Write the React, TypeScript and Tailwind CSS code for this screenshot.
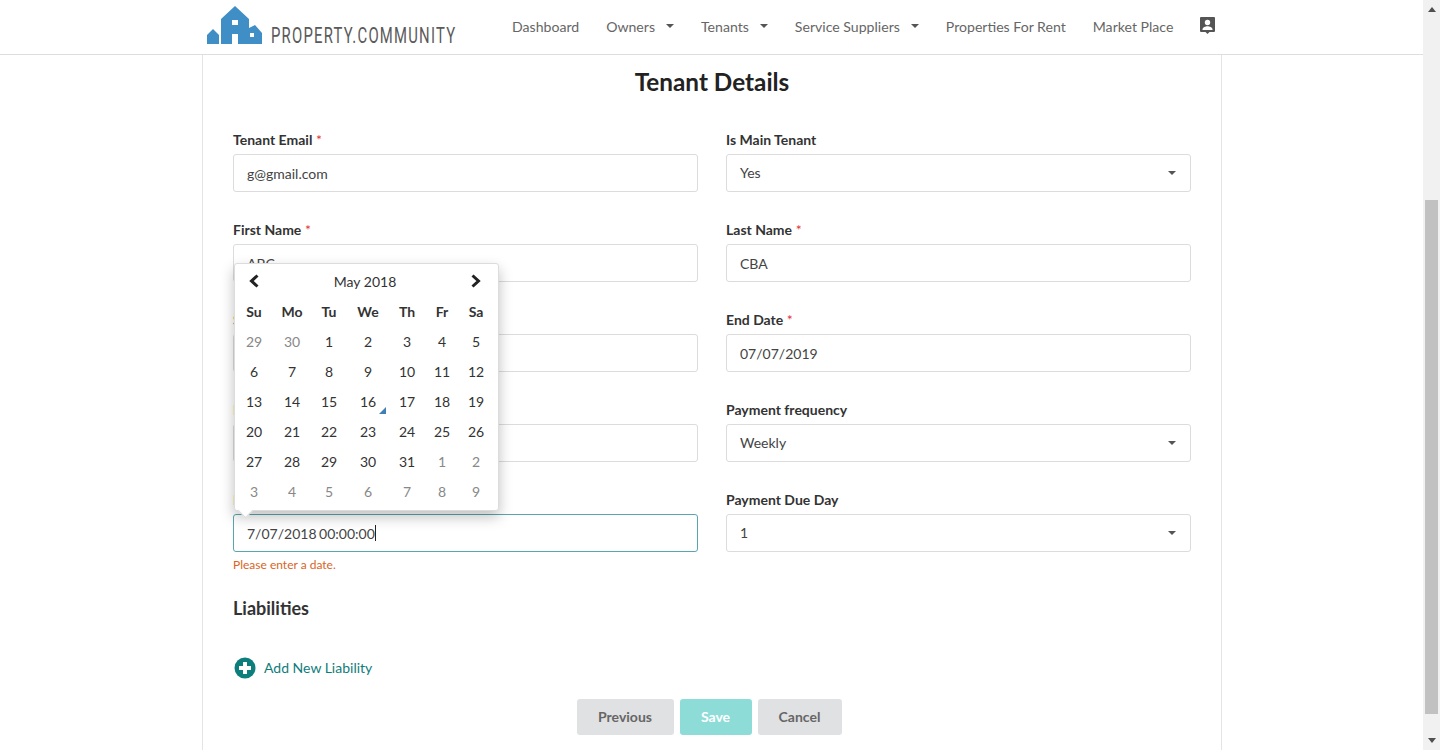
import type { ReactNode } from 'react';

const weeks = [
  [[29, 1], [30, 1], [1], [2], [3], [4], [5]],
  [[6], [7], [8], [9], [10], [11], [12]],
  [[13], [14], [15], [16], [17], [18], [19]],
  [[20], [21], [22], [23], [24], [25], [26]],
  [[27], [28], [29], [30], [31], [1, 1], [2, 1]],
  [[3, 1], [4, 1], [5, 1], [6, 1], [7, 1], [8, 1], [9, 1]],
];

function Caret({ className = '' }: { className?: string }) {
  return (
    <svg width="8" height="4" viewBox="0 0 8 4" className={className}>
      <path d="M0 0h8L4 4z" fill="#555" />
    </svg>
  );
}

function Label({ text, req, error }: { text: string; req?: boolean; error?: boolean }) {
  return (
    <div className={`h-[25px] text-[14px] leading-[22px] font-bold ${error ? 'text-[#d9641e]' : 'text-[#333]'}`}>
      {text}
      {req && <span className="text-[#e0343c] font-normal"> *</span>}
    </div>
  );
}

function Input({ value, focus }: { value: string; focus?: boolean }) {
  return (
    <div
      className={`h-[38px] rounded-[3px] border px-[13px] flex items-center text-[14px] text-[#444] bg-white ${
        focus ? 'border-[#5aa6b0] [word-spacing:-1px]' : 'border-[#dcdcdc]'
      }`}
    >
      {value}
      {focus && <span className="w-px h-[16px] bg-[#222]" />}
    </div>
  );
}

function Select({ value }: { value: string }) {
  return (
    <div className="h-[38px] rounded-[3px] border border-[#dcdcdc] px-[14px] flex items-center justify-between text-[14px] text-[#444] bg-white">
      <span className="-ml-px -mt-[2px]">{value}</span>
      <Caret />
    </div>
  );
}

function Field({ children }: { children: ReactNode }) {
  return <div className="h-[90px]">{children}</div>;
}

function NavItem({ text, caret }: { text: string; caret?: boolean }) {
  return (
    <span className="flex items-center text-[14.1px] text-[#666]">
      {text}
      {caret && <Caret className="ml-[11px]" />}
    </span>
  );
}

function Calendar() {
  return (
    <div className="absolute left-[1px] top-[134px] w-[265px] h-[248px] bg-white rounded-[3px] border border-[#dcdcdc] shadow-[0_6px_14px_rgba(0,0,0,0.25)] pl-[2px] text-[14px] text-[#333] z-10">
      <div className="grid grid-cols-[34px_190px_30px] h-[33px] items-center text-center">
        <svg width="12" height="14" viewBox="0 0 12 14" className="justify-self-center">
          <path d="M9.5 1.5 3.5 7l6 5.5" fill="none" stroke="#222" strokeWidth="3" />
        </svg>
        <span className="text-[14px] -ml-[2px] mt-[2px]">May 2018</span>
        <svg width="12" height="14" viewBox="0 0 12 14" className="justify-self-center">
          <path d="M2.5 1.5 8.5 7l-6 5.5" fill="none" stroke="#222" strokeWidth="3" />
        </svg>
      </div>
      <div className="grid grid-cols-[34px_42px_32px_46px_32px_38px_30px] auto-rows-[30px] items-center text-center">
        {['Su', 'Mo', 'Tu', 'We', 'Th', 'Fr', 'Sa'].map((d) => (
          <span key={d} className="font-bold text-[14px] -mt-[2px]">{d}</span>
        ))}
        {weeks.flatMap((w, i) =>
          w.map((c, j) => (
            <span key={`${i}-${j}`} className={`relative h-[30px] leading-[30px] ${c[1] ? 'text-[#888]' : ''}`}>
              {c[0]}
              {c[0] === 16 && (
                <span className="absolute right-[5px] bottom-[3px] w-0 h-0 border-l-[7px] border-l-transparent border-b-[7px] border-b-[#3f7fb5]" />
              )}
            </span>
          )),
        )}
      </div>
      <span className="absolute left-[5px] -bottom-[6px] w-[11px] h-[11px] rotate-45 bg-white border-r border-b border-[#dcdcdc]" />
    </div>
  );
}

export default function App() {
  return (
    <div className="h-[750px] w-[1440px] overflow-hidden flex bg-white text-[#333]" style={{ fontFamily: 'Lato, "Open Sans", sans-serif' }}>
      <div className="w-[1423px] flex flex-col">
        <header className="h-[55px] border-b border-[#dedede] flex items-center pl-[207px] bg-white shrink-0">
          <svg width="250" height="54" viewBox="207 0 250 54" className="mr-[55px] shrink-0">
            <path fill="#3f8fc6" d="M207 44V35l6-6 6 6v9z" />
            <path fill="#3f8fc6" d="M221 44V19L235 6l14 13v9l6-3 7 8v11h-24V34h-6v10z" />
            <rect x="232" y="20" width="6" height="5" fill="#fff" />
            <rect x="250" y="33" width="4" height="4" fill="#fff" />
            <g transform="translate(271 43) scale(0.66 1)">
              <text x="0" y="0" textLength="279" lengthAdjust="spacing" fontFamily="Roboto" fontSize="22.5" fontWeight="400" fill="#5a5a5a">PROPERTY.COMMUNITY</text>
            </g>
          </svg>
          <nav className="flex items-center gap-[27px] -mt-[1px]">
            <NavItem text="Dashboard" />
            <NavItem text="Owners" caret />
            <NavItem text="Tenants" caret />
            <NavItem text="Service Suppliers" caret />
            <NavItem text="Properties For Rent" />
            <NavItem text="Market Place" />
            <svg width="15" height="18" viewBox="0 0 15 18">
              <path fill="#555" d="M1 0h13a1 1 0 0 1 1 1v13a1 1 0 0 1-1 1H9.5L7.5 17l-2-2H1a1 1 0 0 1-1-1V1a1 1 0 0 1 1-1z" />
              <circle cx="7.5" cy="5.5" r="2.7" fill="#fff" />
              <path fill="#fff" d="M2.5 12.5c0-2.2 3-3.2 5-3.2s5 1 5 3.2v.5h-10z" />
            </svg>
          </nav>
        </header>
        <main className="w-[1020px] ml-[202px] flex-1 border-x border-[#e4e4e4] px-[30px]">
          <h1 className="text-[24.3px] font-bold text-[#222] text-center h-[74px] leading-[54px]">Tenant Details</h1>
          <div className="relative grid grid-cols-2 gap-x-[28px]">
            <Field><Label text="Tenant Email" req /><Input value="g@gmail.com" /></Field>
            <Field><Label text="Is Main Tenant" /><Select value="Yes" /></Field>
            <Field><Label text="First Name" req /><Input value="ABC" /></Field>
            <Field><Label text="Last Name" req /><Input value="CBA" /></Field>
            <Field><Label text="Start Date" req error /><Input value="" /></Field>
            <Field><Label text="End Date" req /><Input value="07/07/2019" /></Field>
            <Field><Label text="Payment Amount" req error /><Input value="" /></Field>
            <Field><Label text="Payment frequency" /><Select value="Weekly" /></Field>
            <Field>
              <Label text="Payment Start Date" req error />
              <Input value="7/07/2018 00:00:00" focus />
              <div className="text-[12px] text-[#d9641e] mt-[4px]">Please enter a date.</div>
            </Field>
            <Field><Label text="Payment Due Day" /><Select value="1" /></Field>
            <Calendar />
          </div>
          <h2 className="text-[18px] font-bold text-[#333] mt-[16px] h-[61px] leading-[26px]">Liabilities</h2>
          <div className="flex items-center h-[24px] gap-[8px] ml-[1px] text-[14px] text-[#0f7c7c]">
            <svg width="22" height="22" viewBox="0 0 22 22">
              <circle cx="11" cy="11" r="10.5" fill="#0c7f7c" />
              <path d="M11 5v12M5 11h12" stroke="#fff" strokeWidth="4" />
            </svg>
            <span className="-mt-[2px]">Add New Liability</span>
          </div>
          <div className="flex justify-center gap-[6px] mt-[19px] ml-[-6px]">
            <button className="w-[97px] h-[36px] pb-[2px] rounded-[3px] bg-[#e0e1e2] text-[14px] font-bold text-[#666]">Previous</button>
            <button className="w-[72px] h-[36px] pb-[2px] rounded-[3px] bg-[#8edcd8] text-[14px] font-bold text-white">Save</button>
            <button className="w-[84px] h-[36px] pb-[2px] rounded-[3px] bg-[#e0e1e2] text-[14px] font-bold text-[#666]">Cancel</button>
          </div>
        </main>
      </div>
      <div className="w-[17px] bg-[#f1f1f1] flex flex-col items-center pt-[7px] shrink-0">
        <svg width="8" height="5" viewBox="0 0 8 5"><path d="M4 0l4 5H0z" fill="#505050" /></svg>
        <div className="w-[13px] h-[514px] bg-[#c1c1c1] mt-[188px]" />
        <svg width="8" height="5" viewBox="0 0 8 5" className="mt-[24px]"><path d="M0 0h8L4 5z" fill="#505050" /></svg>
      </div>
    </div>
  );
}
